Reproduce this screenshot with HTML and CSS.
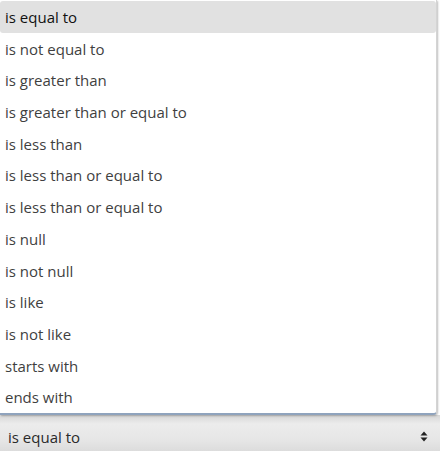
FILE: index.html
```html
<!DOCTYPE html>
<html>
<head>
<meta charset="utf-8">
<link rel="stylesheet" href="styles.css">
</head>
<body>
<div class="page">
  <ul class="menu">
    <li class="item active">is equal to</li>
    <li class="item">is not equal to</li>
    <li class="item">is greater than</li>
    <li class="item">is greater than or equal to</li>
    <li class="item">is less than</li>
    <li class="item">is less than or equal to</li>
    <li class="item">is less than or equal to</li>
    <li class="item">is null</li>
    <li class="item">is not null</li>
    <li class="item">is like</li>
    <li class="item">is not like</li>
    <li class="item">starts with</li>
    <li class="item">ends with</li>
  </ul>
  <div class="select">
    <span class="value">is equal to</span>
    <svg class="arrows" width="8" height="11" viewBox="0 0 8 11"><path d="M4 0.5 L7.5 4.5 H0.5 Z M4 10.5 L7.5 6.5 H0.5 Z" fill="#222"/></svg>
  </div>
</div>
</body>
</html>
```
FILE: styles.css
```css
html, body { margin: 0; padding: 0; background: #fff; }
.page {
  width: 440px;
  height: 451px;
  display: flex;
  flex-direction: column;
  font-family: "Open Sans", "Noto Sans", sans-serif;
  font-size: 15px;
}
.menu {
  list-style: none;
  margin: 0;
  padding: 1px 0 0 0;
  width: 437px;
  height: 415px;
  box-sizing: border-box;
  background: #fff;
  border-right: 1px solid #d4d4d4;
  border-bottom: 2px solid #8fa3bd;
  border-bottom-right-radius: 4px;
  box-shadow: 1px 1px 2px rgba(0,0,0,0.25);
  position: relative;
  z-index: 1;
}
.item {
  height: 31.7px;
  line-height: 32.5px;
  padding-left: 5px;
  color: #3f3f3f;
  white-space: nowrap;
}
.item.active {
  background: #e1e1e1;
  color: #111;
  border-radius: 3px;
}
.select {
  flex: 1;
  display: flex;
  align-items: center;
  justify-content: space-between;
  padding: 7px 12px 0 8px;
  background: linear-gradient(#d6d6d6, #ececec 25%, #e6e6e6 70%, #dcdcdc);
  color: #2a2a2a;
}
.arrows { display: block; }
```
